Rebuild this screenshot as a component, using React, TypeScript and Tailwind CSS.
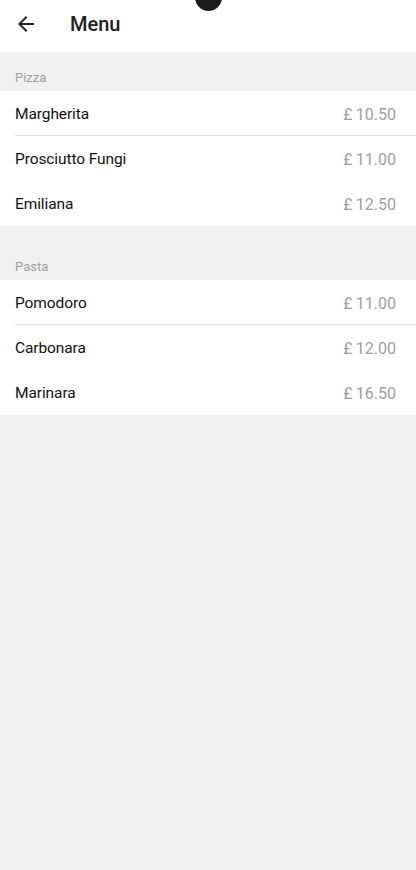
import React from "react";

type Item = { name: string; price: string };
const sections: { title: string; items: Item[] }[] = [
  {
    title: "Pizza",
    items: [
      { name: "Margherita", price: "10.50" },
      { name: "Prosciutto Fungi", price: "11.00" },
      { name: "Emiliana", price: "12.50" },
    ],
  },
  {
    title: "Pasta",
    items: [
      { name: "Pomodoro", price: "11.00" },
      { name: "Carbonara", price: "12.00" },
      { name: "Marinara", price: "16.50" },
    ],
  },
];

export default function App() {
  return (
    <div
      className="relative flex min-h-[870px] w-[416px] flex-col bg-[#f1f1f1]"
      style={{ fontFamily: "Roboto, 'Noto Sans', sans-serif" }}
    >
      <div className="absolute left-[195px] top-[-16px] h-[27px] w-[27px] rounded-full bg-[#1c1c1e]" />
      <header className="flex h-[52px] items-center bg-white pb-[4px]">
        <div className="ml-[14px] flex h-6 w-6 items-center justify-center">
          <svg width="24" height="24" viewBox="0 0 24 24">
            <path
              d="M20 11H7.83l5.59-5.59L12 4l-8 8 8 8 1.41-1.41L7.83 13H20v-2z"
              fill="#212121"
            />
          </svg>
        </div>
        <h1 className="ml-[32px] text-[20px] font-medium text-[#212121]">Menu</h1>
      </header>
      {sections.map((s, si) => (
        <section key={s.title} className={si > 0 ? "mt-[15px]" : ""}>
          <div className="flex h-[39px] items-end pb-[4px] pl-[15px] text-[13px] text-[#a0a0a0]">
            {s.title}
          </div>
          <div className="bg-white">
            {s.items.map((it, i) => (
              <div
                key={it.name}
                className={
                  "ml-[15px] flex h-[45px] items-center justify-between pr-[20px] pt-[3px] " +
                  (i === 0 ? "border-b border-[#e0e0e0]" : "")
                }
              >
                <span className="text-[15.5px] tracking-[-0.1px] text-[#111111]">{it.name}</span>
                <span className="text-[16px] text-[#9e9e9e]">£{"\u2009"}{it.price}</span>
              </div>
            ))}
          </div>
        </section>
      ))}
    </div>
  );
}
